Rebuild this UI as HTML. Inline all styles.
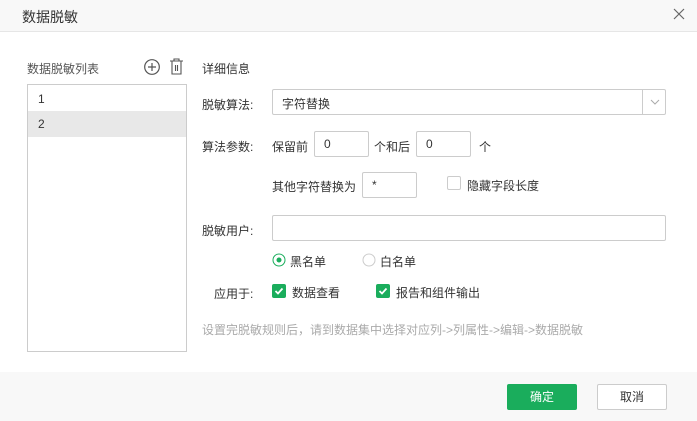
<!DOCTYPE html><html><head><meta charset="utf-8"><style>
*{box-sizing:border-box;margin:0;padding:0}
body{width:697px;height:421px;background:#fff;font-family:"Liberation Sans","Noto Sans CJK SC",sans-serif;font-size:12px;color:#333;position:relative;overflow:hidden}
.a{position:absolute}
.in{position:absolute;border:1px solid #ccc;background:#fff;border-radius:2px}
.lbl{position:absolute;font-size:12px;color:#333;white-space:nowrap}
.chk{position:absolute;width:14px;height:14px;background:#1aad5c;border-radius:2px}
</style></head><body>
<div class="a" style="left:0;top:0;width:697px;height:32px;background:#f8f8f8;border-bottom:1px solid #e6e6e6"></div>
<div class="lbl" style="left:22px;top:7px;font-size:14px">数据脱敏</div>
<svg class="a" style="left:673px;top:8px" width="12" height="12"><path d="M1 1L11 11M11 1L1 11" stroke="#666" stroke-width="1.2"/></svg>
<div class="lbl" style="left:27px;top:60px;color:#555">数据脱敏列表</div>
<svg class="a" style="left:143px;top:58px" width="18" height="18"><circle cx="9" cy="9" r="7.3" fill="none" stroke="#555" stroke-width="1.2"/><path d="M9 5v8M5 9h8" stroke="#555" stroke-width="1.2"/></svg>
<svg class="a" style="left:168px;top:57px" width="18" height="19"><path d="M2 4h13M6 4V2h5v2M4 4v13h9V4M7.5 8v6M9.5 8v6" fill="none" stroke="#555" stroke-width="1.1"/></svg>
<div class="a" style="left:27px;top:84px;width:160px;height:268px;border:1px solid #ccc"></div>
<div class="lbl" style="left:38px;top:92px">1</div>
<div class="a" style="left:28px;top:111px;width:158px;height:26px;background:#e8e8e8"></div>
<div class="lbl" style="left:38px;top:117px">2</div>
<div class="lbl" style="left:202px;top:60px">详细信息</div>
<div class="lbl" style="left:202px;top:96px">脱敏算法:</div>
<div class="in" style="left:272px;top:89px;width:394px;height:26px"></div>
<div class="a" style="left:642px;top:90px;width:1px;height:24px;background:#ccc"></div>
<svg class="a" style="left:649px;top:98px" width="12" height="8"><path d="M2 2l4 4 4-4" fill="none" stroke="#aaa"/></svg>
<div class="lbl" style="left:282px;top:95px">字符替换</div>
<div class="lbl" style="left:202px;top:138px">算法参数:</div>
<div class="lbl" style="left:272px;top:138px">保留前</div>
<div class="in" style="left:314px;top:131px;width:55px;height:26px"></div>
<div class="lbl" style="left:324px;top:137px">0</div>
<div class="lbl" style="left:374px;top:138px">个和后</div>
<div class="in" style="left:416px;top:131px;width:55px;height:26px"></div>
<div class="lbl" style="left:426px;top:137px">0</div>
<div class="lbl" style="left:479px;top:138px">个</div>
<div class="lbl" style="left:272px;top:178px">其他字符替换为</div>
<div class="in" style="left:362px;top:172px;width:55px;height:26px"></div>
<div class="lbl" style="left:372px;top:178px">*</div>
<div class="a" style="left:447px;top:176px;width:14px;height:14px;border:1px solid #ccc;border-radius:2px"></div>
<div class="lbl" style="left:467px;top:177px">隐藏字段长度</div>
<div class="lbl" style="left:202px;top:222px">脱敏用户:</div>
<div class="in" style="left:272px;top:215px;width:394px;height:26px"></div>
<svg class="a" style="left:272px;top:253px" width="14" height="14"><circle cx="7" cy="7" r="6" fill="none" stroke="#1aad5c"/><circle cx="7" cy="7" r="2.5" fill="#1aad5c"/></svg>
<div class="lbl" style="left:290px;top:253px">黑名单</div>
<svg class="a" style="left:362px;top:253px" width="14" height="14"><circle cx="7" cy="7" r="6" fill="none" stroke="#ccc"/></svg>
<div class="lbl" style="left:380px;top:253px">白名单</div>
<div class="lbl" style="left:214px;top:285px">应用于:</div>
<div class="chk" style="left:272px;top:284px"></div>
<svg class="a" style="left:272px;top:284px" width="14" height="14"><path d="M3.5 7l2.5 2.5 4.5-5" fill="none" stroke="#fff" stroke-width="1.8"/></svg>
<div class="lbl" style="left:292px;top:284px">数据查看</div>
<div class="chk" style="left:376px;top:284px"></div>
<svg class="a" style="left:376px;top:284px" width="14" height="14"><path d="M3.5 7l2.5 2.5 4.5-5" fill="none" stroke="#fff" stroke-width="1.8"/></svg>
<div class="lbl" style="left:396px;top:284px">报告和组件输出</div>
<div class="lbl" style="left:202px;top:321px;color:#aaa">设置完脱敏规则后，请到数据集中选择对应列-&gt;列属性-&gt;编辑-&gt;数据脱敏</div>
<div class="a" style="left:0;top:372px;width:697px;height:49px;background:#f8f8f8"></div>
<div class="a" style="left:507px;top:384px;width:70px;height:26px;background:#1aad5c;border-radius:2px;color:#fff;text-align:center;line-height:26px">确定</div>
<div class="a" style="left:597px;top:384px;width:70px;height:26px;background:#fff;border:1px solid #ccc;border-radius:2px;color:#333;text-align:center;line-height:24px">取消</div>
</body></html>
